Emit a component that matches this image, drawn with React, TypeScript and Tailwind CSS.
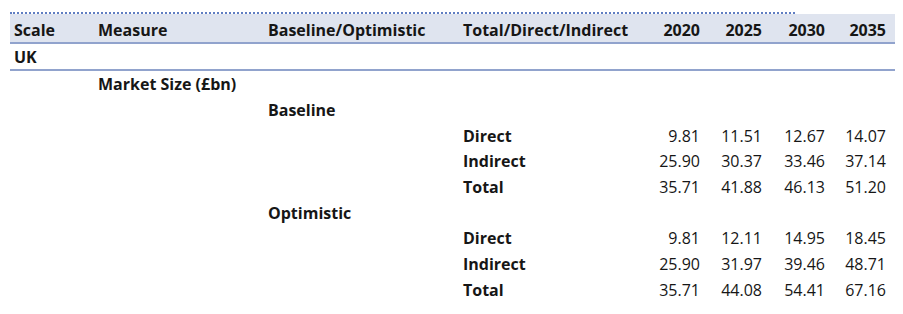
import React from "react";

type Row = {
  h: string;
  scale?: string;
  measure?: string;
  scenario?: string;
  kind?: string;
  values?: string[];
  border?: boolean;
};

const rows: Row[] = [
  { h: "h-[27px]", scale: "UK", border: true },
  { h: "h-[26px]", measure: "Market Size (£bn)" },
  { h: "h-[26px]", scenario: "Baseline" },
  { h: "h-[25px]", kind: "Direct", values: ["9.81", "11.51", "12.67", "14.07"] },
  { h: "h-[26px]", kind: "Indirect", values: ["25.90", "30.37", "33.46", "37.14"] },
  { h: "h-[26px]", kind: "Total", values: ["35.71", "41.88", "46.13", "51.20"] },
  { h: "h-[25px]", scenario: "Optimistic" },
  { h: "h-[26px]", kind: "Direct", values: ["9.81", "12.11", "14.95", "18.45"] },
  { h: "h-[26px]", kind: "Indirect", values: ["25.90", "31.97", "39.46", "48.71"] },
  { h: "h-[26px]", kind: "Total", values: ["35.71", "44.08", "54.41", "67.16"] },
];

const cols = "grid grid-cols-[84px_170px_195px_181px_69px_62px_63px_61px] items-center";

const App: React.FC = () => {
  return (
    <div className="w-[903px] h-[314px] bg-white pt-[12px] pl-[10px] text-[16px] text-[#161616] font-['Open_Sans',sans-serif] overflow-hidden">
      <div className="w-[785px] border-t-2 border-dotted border-[#5f7dc2]" />
      <div className="w-[885px]">
        <div className={`${cols} h-[30px] pt-[3px] bg-[#dfe4ef] border-b-2 border-[#91a3cd] font-bold`}>
          <div className="pl-[4px]">Scale</div>
          <div className="pl-[4px]">Measure</div>
          <div className="pl-[4px]">Baseline/Optimistic</div>
          <div className="pl-[4px]">Total/Direct/Indirect</div>
          <div className="text-right pr-[9px]">2020</div>
          <div className="text-right pr-[9px]">2025</div>
          <div className="text-right pr-[9px]">2030</div>
          <div className="text-right pr-[9px]">2035</div>
        </div>
        {rows.map((r, i) => (
          <div key={i} className={`${cols} ${r.h} ${r.border ? "border-b-2 border-[#91a3cd]" : ""}`}>
            <div className="pl-[4px] font-bold">{r.scale}</div>
            <div className="pl-[4px] font-bold">{r.measure}</div>
            <div className="pl-[4px] font-bold">{r.scenario}</div>
            <div className="pl-[4px] font-bold">{r.kind}</div>
            {(r.values ?? ["", "", "", ""]).map((v, j) => (
              <div key={j} className="text-right pr-[9px]">{v}</div>
            ))}
          </div>
        ))}
      </div>
    </div>
  );
};

export default App;
